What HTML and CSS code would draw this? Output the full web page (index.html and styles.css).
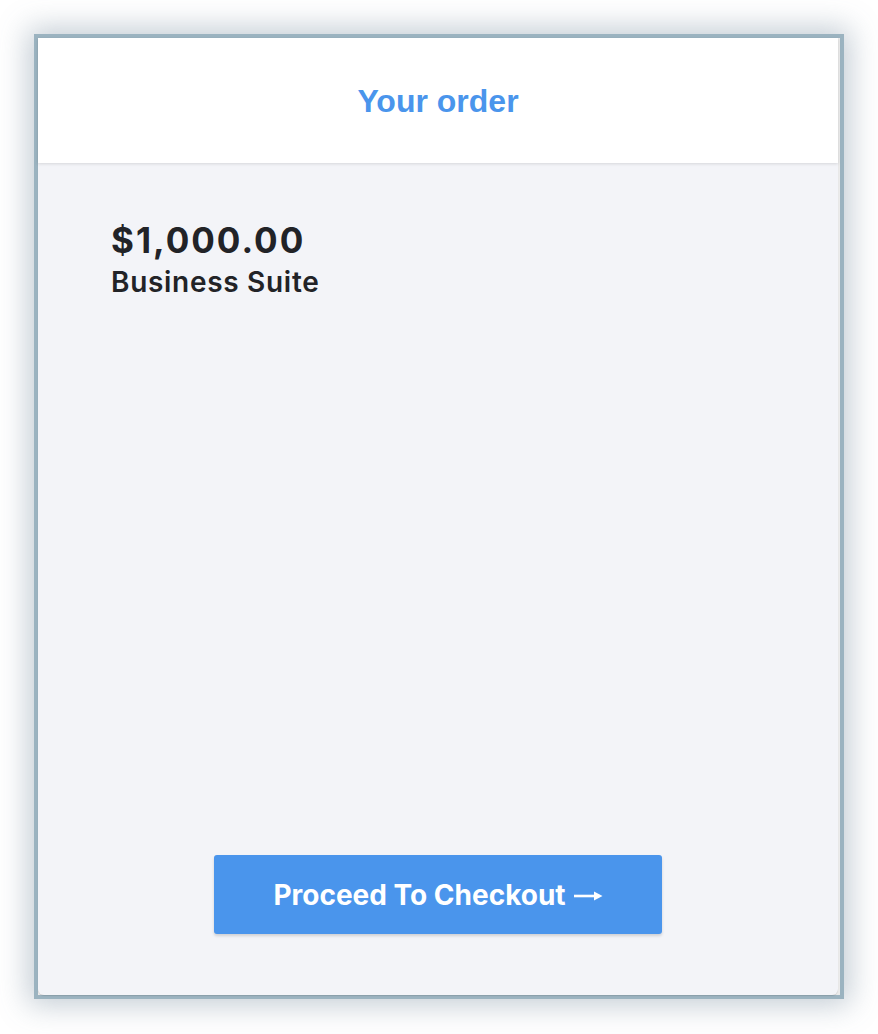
FILE: index.html
```html
<!DOCTYPE html>
<html lang="en">
<head>
    <meta charset="UTF-8">
    <title>Your order</title>
    <link rel="stylesheet" href="styles.css">
</head>
<body>
<div class="page">
    <div class="frame">
        <div class="card">
            <div class="card-head"><h1>Your order</h1></div>
            <div class="card-body">
                <div class="item">
                    <div class="price">$1,000.00</div>
                    <div class="name">Business Suite</div>
                </div>
                <a class="checkout" href="javascript:;">Proceed To Checkout
                    <svg class="arrow" width="29" height="12" viewBox="0 0 29 12"><path d="M0 6h21" stroke="#fff" stroke-width="2.6"/><path d="M20 1.5L28.5 6 20 10.5z" fill="#fff"/></svg>
                </a>
            </div>
        </div>
    </div>
</div>
</body>
</html>
```

FILE: styles.css
```css
*{
    margin:0;
    padding:0;
    box-sizing: border-box;
    text-decoration: none;
}
html,body{
    height: 100%;
    background: #fff;
}
.page{
    padding:34px;
}
.frame{
    width: 810px;
    height: 965px;
    border:4px solid #9bb3c0;
    background: #ebebeb;
    padding-right: 2px;
    box-shadow: 0 0 28px 6px rgba(90,115,135,0.36);
}
.card{
    height: 100%;
    display: flex;
    flex-direction: column;
    background: #f3f4f8;
    border-radius: 0 0 6px 6px;
    box-shadow: 0 1px 1px rgba(0,0,0,0.12);
}
.card-head{
    height: 125px;
    background: #fff;
    display: flex;
    align-items: center;
    justify-content: center;
    box-shadow: 0 1px 3px rgba(0,0,0,0.12);
    position: relative;
}
.card-head h1{
    font-family: "Liberation Sans", Arial, sans-serif;
    font-weight: bold;
    font-size: 32px;
    color: #4a95ec;
    margin-top: 1px;
}
.card-body{
    flex: 1;
    display: flex;
    flex-direction: column;
    justify-content: space-between;
    align-items: center;
    padding:56px 0 61px;
    font-family: Inter, "Noto Sans", sans-serif;
    color: #222327;
}
.item{
    align-self: flex-start;
    padding-left: 73px;
}
.price{
    font-size: 35px;
    font-weight: 700;
    letter-spacing: 2px;
    line-height: 42px;
}
.name{
    font-size: 28px;
    font-weight: 600;
    letter-spacing: 0.7px;
    line-height: 36px;
    margin-top: 3px;
}
.checkout{
    display: flex;
    align-items: center;
    justify-content: center;
    width: 448px;
    height: 79px;
    background: #4a95ec;
    color: #fff;
    border-radius: 3px;
    font-size: 28px;
    font-weight: 700;
    box-shadow: 0 2px 3px rgba(0,0,0,0.15);
}
.checkout .arrow{
    margin-left: 8px;
    margin-top: 2px;
}
```
